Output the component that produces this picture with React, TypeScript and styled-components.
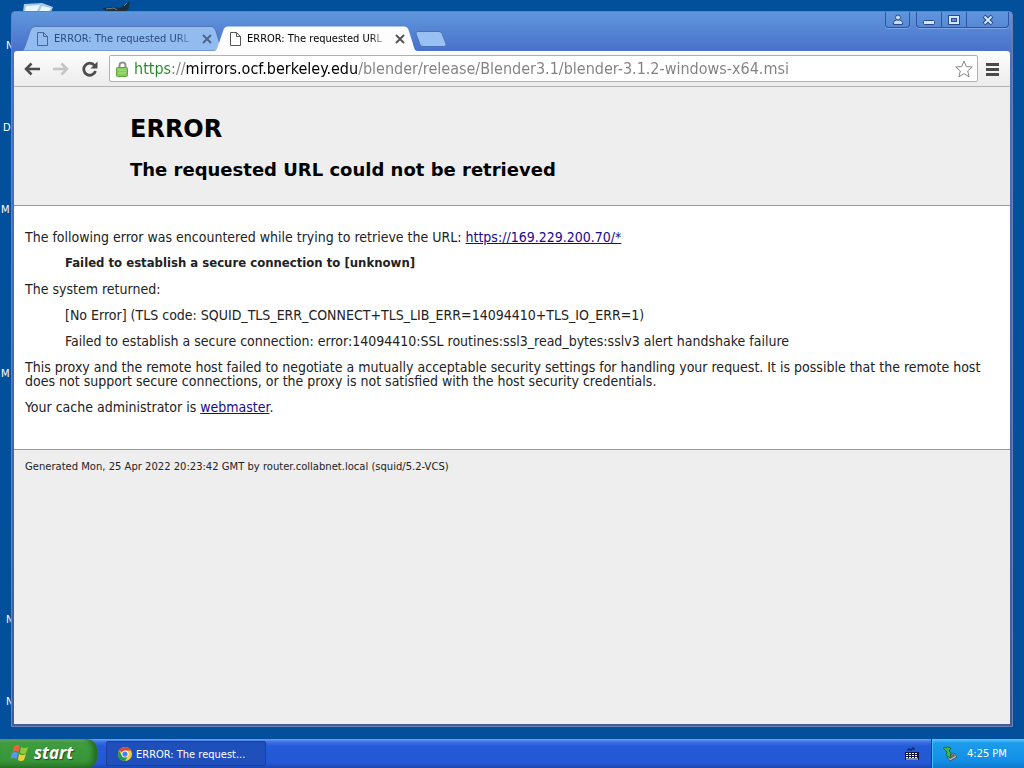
import React from "react";
import styled, { createGlobalStyle } from "styled-components";

const ui = `"DejaVu Sans Condensed", "DejaVu Sans", sans-serif`;
const page = `"DejaVu Sans", Verdana, sans-serif`;

const GlobalStyle = createGlobalStyle`
  *, *::before, *::after { box-sizing: border-box; }
  body { margin: 0; font-family: ${ui}; font-size: 11px; }
  button { font: inherit; padding: 0; border: 0; background: none; color: inherit; }
`;

const Screen = styled.div`
  display: flex;
  flex-direction: column;
  min-height: 100vh;
  background: #024f9c;
  overflow: hidden;
`;

const Desktop = styled.main`
  position: relative;
  flex: 1;
  display: flex;
  padding: 11px 11px 12px 11px;
`;

const DesktopLabel = styled.span<{ $top: number; $left: number }>`
  position: absolute;
  top: ${(p) => p.$top}px;
  left: ${(p) => p.$left}px;
  color: #fff;
  line-height: 14px;
`;

const DesktopIcon = styled.svg<{ $left: number }>`
  position: absolute;
  top: 0;
  left: ${(p) => p.$left}px;
`;

const BrowserWindow = styled.section`
  position: relative;
  flex: 1;
  min-width: 0;
  display: flex;
  flex-direction: column;
  padding: 0 2px 2px;
  border: 1px solid #6c7fb0;
  border-radius: 4px 4px 0 0;
  background: linear-gradient(#5f96dc, #4a72cc 38px, #4a70c8 60px, #3d5f9f);
`;

const TitleBar = styled.header`
  display: flex;
  align-items: flex-end;
  height: 39px;
  padding-left: 7px;
`;

const TabItem = styled.div<{ $active?: boolean }>`
  position: relative;
  display: flex;
  align-items: center;
  width: 203px;
  height: 25px;
  margin-right: -10px;
  padding: 1px 12px 0 16px;
  color: ${(p) => (p.$active ? "#000" : "#2a4a80")};
  z-index: ${(p) => (p.$active ? 1 : 0)};
`;

const TabShape = styled.svg`
  position: absolute;
  inset: 0;
  width: 100%;
  height: 100%;
`;

const TabButton = styled.button`
  position: relative;
  flex: 1;
  min-width: 0;
  display: flex;
  align-items: center;
  gap: 6px;
`;

const TabTitle = styled.span`
  white-space: nowrap;
  line-height: 16px;
  mask-image: linear-gradient(to left, rgb(0 0 0 / 30%), #000 12px);
`;

const CloseTab = styled.button`
  position: relative;
  display: flex;
`;

const NewTab = styled.button`
  display: flex;
  margin: 0 0 4px 8px;
`;

const WindowControls = styled.div`
  display: flex;
  align-self: flex-start;
  margin: 0 1px 0 auto;
  gap: 6px;
`;

const ControlGroup = styled.div`
  display: flex;
  border: 1px solid #2f54a3;
  border-top: 0;
  border-radius: 0 0 4px 4px;
  box-shadow: 0 1px 0 #7fa5e6;
`;

const ControlButton = styled.button<{ $width: number }>`
  display: flex;
  align-items: center;
  justify-content: center;
  width: ${(p) => p.$width}px;
  height: 15px;
  & + & { border-left: 1px solid #2f54a3; }
`;

const Toolbar = styled.nav`
  display: flex;
  align-items: center;
  height: 36px;
  padding: 0 11px 0 8px;
  border-bottom: 1px solid #b4b4b4;
  border-radius: 3px 3px 0 0;
  background: linear-gradient(#fdfdfd, #ececec);
`;

const ToolButton = styled.button`
  display: flex;
  justify-content: center;
  width: 20px;
  margin-right: 9px;
`;

const AddressBar = styled.div`
  flex: 1;
  display: flex;
  align-items: center;
  height: 27px;
  margin-right: 8px;
  padding: 0 4px 0 6px;
  gap: 5px;
  border: 1px solid #b0b0b0;
  border-radius: 2px;
  background: #fff;
`;

const AddressInput = styled.input`
  flex: 1;
  min-width: 0;
  height: 24px;
  padding: 0;
  border: 0;
  outline: 0;
  font-family: ${ui};
  font-size: 16px;
  background: linear-gradient(
    to right,
    #218a21 37px,
    #808080 37px 52px,
    #000 52px 223px,
    #808080 223px
  );
  background-clip: text;
  -webkit-text-fill-color: transparent;
`;

const IconButton = styled.button`
  display: flex;
`;

const Viewport = styled.article`
  flex: 1;
  font-family: ${page};
  color: #222;
  background: #eee;
`;

const Titles = styled.header`
  padding: 28px 10px 22px 116px;
  color: #000;
`;

const Heading = styled.h1`
  margin: 0 0 13px;
  font-size: 24px;
  line-height: 29px;
`;

const SubHeading = styled.h2`
  margin: 0;
  font-size: 18px;
  line-height: 26px;
`;

const Content = styled.section`
  padding: 24px 11px 23px;
  border-top: 1px solid #999;
  border-bottom: 1px solid #999;
  font-family: ${ui};
  font-size: 14px;
  line-height: 14px;
  background: #fff;
`;

const Paragraph = styled.p`
  margin: 0 0 12px;
`;

const Quote = styled.blockquote`
  margin: 0 40px 12px;
`;

const Strong = styled.strong`
  display: block;
  font-size: 13px;
`;

const Link = styled.a`
  color: #1a0a8c;
`;

const Footer = styled.footer`
  padding: 10px 11px;
  font-size: 10px;
  line-height: 14px;
`;

const Taskbar = styled.footer`
  display: flex;
  align-items: stretch;
  height: 29px;
  color: #fff;
  background: linear-gradient(#6fa0f0, #3a70e4 3px, #255bd8 7px, #2458d4 24px, #1d48b0);
`;

const StartButton = styled.button`
  display: flex;
  align-items: center;
  gap: 4px;
  width: 97px;
  padding: 0 0 2px 10px;
  border-radius: 0 10px 10px 0;
  color: #fff;
  font: italic bold 17px "Open Sans", sans-serif;
  text-shadow: 1px 1px 1px #1d4d1d;
  background: linear-gradient(#7cc07c, #3f9c3f 4px, #379537 22px, #2a782a);
  box-shadow: inset -4px 0 5px #236b23;
`;

const TaskButton = styled.button`
  display: flex;
  align-items: center;
  gap: 4px;
  width: 160px;
  margin: 2px auto 2px 9px;
  padding: 1px 0 0 11px;
  border: 1px solid #1a3f9c;
  border-radius: 2px;
  background: #1f4fba;
`;

const KeyboardButton = styled.button`
  display: flex;
  align-items: center;
  margin-right: 12px;
`;

const Tray = styled.div`
  display: flex;
  align-items: center;
  gap: 10px;
  width: 93px;
  padding-left: 10px;
  border-left: 1px solid #0d3f9c;
  background: linear-gradient(#5cc8fa, #1c9cec 4px, #128fe6 22px, #0f78cc);
  box-shadow: inset 1px 0 0 #3fc4fa;
`;

const FileIcon = ({ stroke }: { stroke: string }) => (
  <svg width="11" height="14" viewBox="0 0 11 14" fill="none" stroke={stroke} aria-hidden="true">
    <path d="M.5.5h6l4 4v9H.5zM6.5.5v4h4" />
  </svg>
);

const Tab = ({ active, stroke }: { active?: boolean; stroke: string }) => (
  <TabItem $active={active}>
    <TabShape viewBox="0 0 202 25" preserveAspectRatio="none" aria-hidden="true">
      <path
        d="M0 25C3 25 3 22 4 20L9 5C10 2 11 .5 14 .5H189C192 .5 193 2 194 5L198 18C199 22 200 25 202 25Z"
        fill={active ? "#fdfdfd" : "#92bbef"}
        stroke={active ? "none" : "#5578b4"}
      />
    </TabShape>
    <TabButton>
      <FileIcon stroke={stroke} />
      <TabTitle>ERROR: The requested URL</TabTitle>
    </TabButton>
    <CloseTab aria-label="Close tab">
      <svg width="11" height="12" fill="none" stroke={stroke} strokeWidth="2">
        <path d="M2 2l8 8M10 2l-8 8" />
      </svg>
    </CloseTab>
  </TabItem>
);

export default function App() {
  return (
    <>
      <GlobalStyle />
      <Screen>
        <Desktop>
          <DesktopIcon $left={22} width="34" height="12" aria-hidden="true">
            <path d="M2 4L20 3l11 4-2 5H1z" fill="#a9c9e8" />
            <path d="M4 6l14-1-3 6H3zM20 6l9 2-3 4h-9z" fill="#e8f6ff" />
          </DesktopIcon>
          <DesktopIcon $left={101} width="32" height="12" aria-hidden="true">
            <path d="M1 8l10-1 8 1 9-6 1 1-2 7-6 3H8z" fill="#1d2e38" />
            <path d="M5 9l8-1 3 2M23 6l3-3" fill="none" stroke="#6c8490" />
          </DesktopIcon>
          <DesktopLabel $top={39} $left={6}>N</DesktopLabel>
          <DesktopLabel $top={121} $left={3}>D</DesktopLabel>
          <DesktopLabel $top={203} $left={1}>M</DesktopLabel>
          <DesktopLabel $top={367} $left={1}>M</DesktopLabel>
          <DesktopLabel $top={613} $left={6}>N</DesktopLabel>
          <DesktopLabel $top={695} $left={6}>N</DesktopLabel>

          <BrowserWindow>
            <TitleBar>
              <Tab stroke="#4a668f" />
              <Tab active stroke="#555" />
              <NewTab aria-label="New tab">
                <svg width="32" height="16">
                  <path d="M3 .5H24q2 0 3 2l4 10q1 3-2 3H8q-2 0-3-2L1 3Q0 .5 3 .5z" fill="#98c0f2" stroke="#4a70b4" />
                </svg>
              </NewTab>
              <WindowControls>
                <ControlGroup>
                  <ControlButton $width={23} aria-label="Profile">
                    <svg width="12" height="12" fill="#c4dcfa" stroke="#2a4a8c">
                      <path d="M1.5 10.500v-2q0-2 3-2.500h3q3 .5 3 2.500v2z" />
                      <circle cx="6" cy="3.500" r="2.500" />
                    </svg>
                  </ControlButton>
                </ControlGroup>
                <ControlGroup>
                  <ControlButton $width={24} aria-label="Minimize">
                    <svg width="14" height="12"><rect x="1.500" y="6.500" width="11" height="4" rx="1" fill="#d4e6fc" stroke="#2a4a8c" /></svg>
                  </ControlButton>
                  <ControlButton $width={25} aria-label="Maximize">
                    <svg width="14" height="12" fill="none">
                      <rect x="3" y="3" width="8" height="6" stroke="#2a4a8c" strokeWidth="4" />
                      <rect x="3" y="3" width="8" height="6" stroke="#d4e6fc" strokeWidth="2" />
                    </svg>
                  </ControlButton>
                  <ControlButton $width={42} aria-label="Close">
                    <svg width="14" height="12" fill="none">
                      <path d="M3 2l8 8M11 2l-8 8" stroke="#2a4a8c" strokeWidth="4" />
                      <path d="M3.500 2.500l7 7M10.500 2.500l-7 7" stroke="#d4e6fc" strokeWidth="2" />
                    </svg>
                  </ControlButton>
                </ControlGroup>
              </WindowControls>
            </TitleBar>

            <Toolbar>
              <ToolButton aria-label="Back">
                <svg width="16" height="14" fill="none" stroke="#4d4d4d" strokeWidth="2.500"><path d="M7.500 1.500L2 7l5.500 5.500M2 7h14" /></svg>
              </ToolButton>
              <ToolButton aria-label="Forward">
                <svg width="16" height="14" fill="none" stroke="#c4c4c4" strokeWidth="2.500"><path d="M8.500 1.500L14 7l-5.500 5.500M0 7h14" /></svg>
              </ToolButton>
              <ToolButton aria-label="Reload">
                <svg width="18" height="16" fill="none">
                  <path d="M13.500 4.500A6 6 0 1 0 14.500 10" stroke="#4d4d4d" strokeWidth="2.800" />
                  <path d="M16.500 .5v7H9.500z" fill="#4d4d4d" />
                </svg>
              </ToolButton>
              <AddressBar>
                <svg width="13" height="16" aria-hidden="true">
                  <path d="M3.500 8V4.500a3 3 0 0 1 6 0V8" fill="none" stroke="#8c948c" strokeWidth="2" />
                  <rect x=".5" y="6.500" width="11" height="9" rx="1" fill="#86cc5c" stroke="#5ca83c" />
                  <path d="M2 9h8M2 12h8" stroke="#a8e088" />
                </svg>
                <AddressInput
                  aria-label="Address"
                  defaultValue="https://mirrors.ocf.berkeley.edu/blender/release/Blender3.1/blender-3.1.2-windows-x64.msi"
                />
                <IconButton aria-label="Bookmark this page">
                  <svg width="18" height="18" fill="#fff" stroke="#858585">
                    <path d="M9 1l2.300 5.600 5.900.400-4.500 3.900 1.400 5.900L9 13.600l-5.100 3.200 1.400-5.900L.8 7l5.900-.4z" />
                  </svg>
                </IconButton>
              </AddressBar>
              <IconButton aria-label="Menu">
                <svg width="13" height="14" stroke="#4a4a4a" strokeWidth="3"><path d="M0 2.500h13M0 7.500h13M0 12.500h13" /></svg>
              </IconButton>
            </Toolbar>

            <Viewport>
              <Titles>
                <Heading>ERROR</Heading>
                <SubHeading>The requested URL could not be retrieved</SubHeading>
              </Titles>
              <Content>
                <Paragraph>
                  The following error was encountered while trying to retrieve the URL:{" "}
                  <Link href="#url">https://169.229.200.70/*</Link>
                </Paragraph>
                <Quote><Strong>Failed to establish a secure connection to [unknown]</Strong></Quote>
                <Paragraph>The system returned:</Paragraph>
                <Quote>[No Error] (TLS code: SQUID_TLS_ERR_CONNECT+TLS_LIB_ERR=14094410+TLS_IO_ERR=1)</Quote>
                <Quote>
                  Failed to establish a secure connection: error:14094410:SSL routines:ssl3_read_bytes:sslv3 alert handshake failure
                </Quote>
                <Paragraph>
                  This proxy and the remote host failed to negotiate a mutually acceptable security settings for handling your
                  request. It is possible that the remote host does not support secure connections, or the proxy is not satisfied
                  with the host security credentials.
                </Paragraph>
                <Paragraph>
                  Your cache administrator is <Link href="#webmaster">webmaster</Link>.
                </Paragraph>
              </Content>
              <Footer>Generated Mon, 25 Apr 2022 20:23:42 GMT by router.collabnet.local (squid/5.2-VCS)</Footer>
            </Viewport>
          </BrowserWindow>
        </Desktop>

        <Taskbar>
          <StartButton>
            <svg width="20" height="18" aria-hidden="true">
              <path d="M4 2q3-2 6 0L8.500 8q-3-2-6 0z" fill="#e8643c" />
              <path d="M11 3q3 2 7 0l-2 6q-3 2-6 0z" fill="#8ccc3c" />
              <path d="M2 9q3-2 6 0l-1.500 6q-3-2-6 0z" fill="#5c94f0" />
              <path d="M9 10q3 2 7 0l-2 6q-3 2-6 0z" fill="#f4cc3c" />
            </svg>
            start
          </StartButton>
          <TaskButton>
            <svg width="14" height="14" viewBox="0 0 16 16" aria-hidden="true">
              <circle cx="8" cy="8" r="8" fill="#f4cc3c" />
              <path d="M8 8L1.100 4A8 8 0 0 1 14.900 4H8z" fill="#dc4437" />
              <path d="M1.100 4A8 8 0 0 0 8 16l3.500-6H4.500z" fill="#24984c" />
              <circle cx="8" cy="8" r="4" fill="#fff" />
              <circle cx="8" cy="8" r="3" fill="#4484f0" />
            </svg>
            ERROR: The request...
          </TaskButton>
          <KeyboardButton aria-label="Input language">
            <svg width="14" height="14">
              <path d="M3 4V2h2v1h2V1h2v2" fill="none" stroke="#0c1c4c" />
              <path d="M0 5h14v8H0z" fill="#0c1440" />
              <path d="M1 6.500h12M1 8.500h12M1 10.500h12" stroke="#fff" strokeDasharray="2 1" />
              <path d="M1 12h12" stroke="#fff" />
            </svg>
          </KeyboardButton>
          <Tray>
            <svg width="15" height="16" aria-hidden="true">
              <path d="M5 11l7-4 3 4-7 4z" fill="#b8bcc0" stroke="#4c5458" />
              <path d="M7 11l5-3 1 2-5 3z" fill="#5c6468" />
              <path d="M1 2l5-1 3 1-2 3 2 2-1 5-4-3 1-3z" fill="#3cb84c" stroke="#1c6c34" />
            </svg>
            <span>4:25 PM</span>
          </Tray>
        </Taskbar>
      </Screen>
    </>
  );
}
